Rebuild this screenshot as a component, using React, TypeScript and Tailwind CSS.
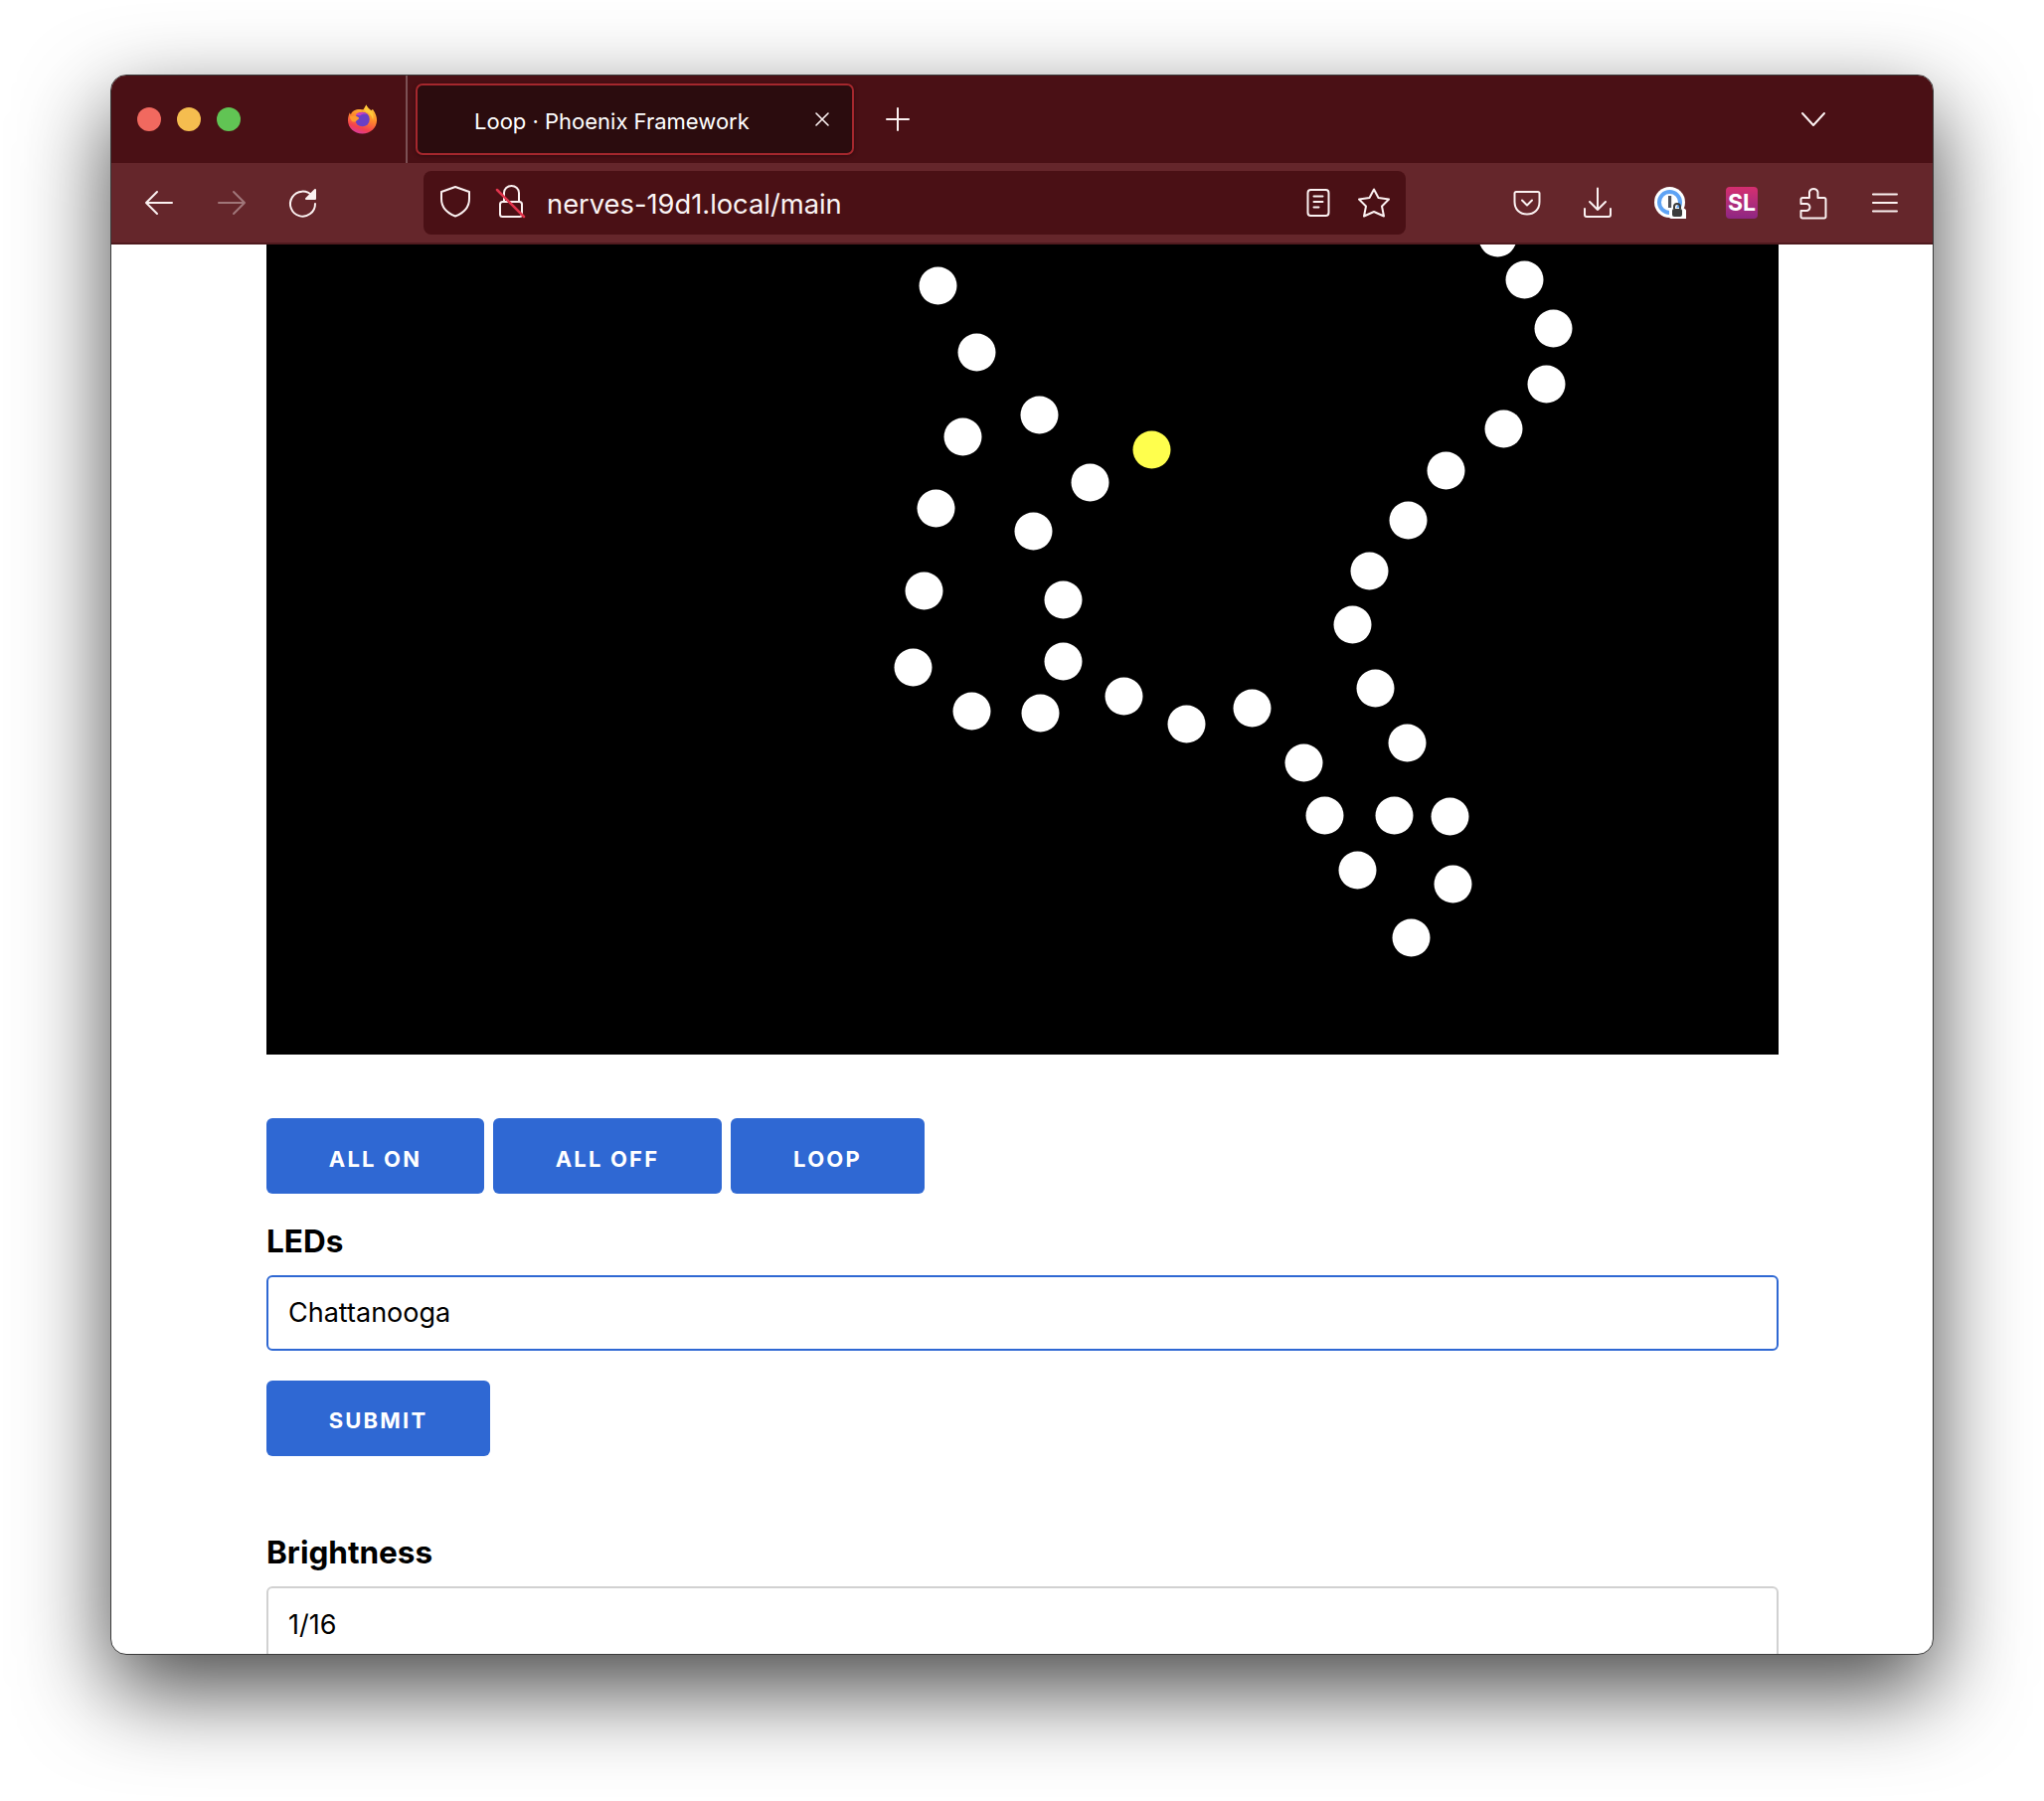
const ledDots = [
  [1506, 239], [1533, 281], [1562, 330], [1555, 386], [1512, 431], [1454, 473], [1416, 523], [1377, 574],
  [1360, 628], [1383, 692], [1415, 747], [1458, 821], [1402, 820], [1461, 889], [1419, 943], [1365, 875],
  [1332, 820], [1311, 767], [1259, 712], [1193, 728], [1130, 700], [1046, 717], [977, 715], [918, 671],
  [929, 594], [941, 511], [968, 439], [982, 354], [943, 287], [1045, 417], [1096, 485], [1039, 534],
  [1069, 603], [1069, 665],
]

const iconClass = 'w-7 h-7 shrink-0 overflow-visible'

function Stroke({ children, className = '', opacity = 1 }: { children: React.ReactNode; className?: string; opacity?: number }) {
  return (
    <svg viewBox="0 0 28 28" fill="none" stroke="#fbf1f1" strokeWidth={2} strokeLinecap="round" strokeLinejoin="round" opacity={opacity} className={`${iconClass} ${className}`}>
      {children}
    </svg>
  )
}

function FirefoxLogo() {
  return (
    <svg viewBox="0 0 32 32" className="w-[31px] h-[32px] shrink-0">
      <defs>
        <linearGradient id="ff-body" x1="0.7" y1="0" x2="0.35" y2="1">
          <stop offset="0" stopColor="#ffd23c" />
          <stop offset="0.45" stopColor="#ff8a2b" />
          <stop offset="0.8" stopColor="#f4404f" />
          <stop offset="1" stopColor="#d83aa0" />
        </linearGradient>
      </defs>
      <path d="M20 1c1 3 3 4 5 6 1-1 1-1 2-1 3 4 4 8 4 11 0 8-7 14-15 14S1 25 1 17c0-3 1-6 2-8 0 1 1 2 1 2 1-3 3-4 6-5 3-1 6 0 7 0 1-2 2-3 3-5z" fill="url(#ff-body)" />
      <circle cx="16" cy="16" r="7.5" fill="#6a3fc4" />
      <path d="M9 11c3-3 9-3 12 0-3-1-6 0-7 1-2 0-4 0-5-1z" fill="#c83fc0" />
      <path d="M3 13c3-1 7-1 9 1 1 1 0 3-2 3 0 2-3 2-5 1-1-2-2-3-2-5z" fill="#ff9a2e" />
      <path d="M20 1c1 3 3 4 5 6 2 2 3 6 2 10-1-5-4-8-8-9-1-3 0-5 1-7z" fill="#ffc93a" />
    </svg>
  )
}

function OnePassword() {
  return (
    <svg viewBox="0 0 32 32" className="w-8 h-8 shrink-0">
      <circle cx="15.500" cy="15.500" r="15.500" fill="#fff" />
      <circle cx="15.500" cy="15.500" r="10.500" fill="none" stroke="#5ea3f5" strokeWidth="4" />
      <rect x="14" y="9" width="3.200" height="12" fill="#50525a" />
      <path d="M17 32c-1 0-2-1-2-2v-7c0-1 1-2 2-2h10c2 0 5 1 5 3v8z" fill="#fff" />
      <path d="M20 22v-2a3 3 0 0 1 6 0v2" fill="none" stroke="#3b3b3b" strokeWidth="2" />
      <rect x="18" y="22" width="10" height="8" rx="2" fill="#3b3b3b" />
    </svg>
  )
}

function SavedLinks() {
  return (
    <div className="w-8 h-8 shrink-0 rounded-[4px] bg-gradient-to-b from-[#d52e6f] to-[#8e2583] flex items-center justify-center">
      <span className="font-['Inter',sans-serif] text-[23px] font-bold leading-none text-white">SL</span>
    </div>
  )
}

function ActionButton({ label, width }: { label: string; width: string }) {
  return (
    <button className={`${width} h-[76px] rounded-[6px] bg-[#2f68d3] text-white text-[22px] font-bold tracking-[0.1em] pt-[6px]`}>
      {label}
    </button>
  )
}

export default function App() {
  return (
    <div className="w-[2056px] h-[1812px] bg-white pt-[75px] pl-[111px] font-['Inter',sans-serif]">
      <div className="w-[1834px] h-[1590px] rounded-[16px] overflow-hidden bg-white flex flex-col border border-[#3a3a3a] shadow-[0_35px_90px_rgba(0,0,0,0.72)]">
        {/* Tab strip */}
        <div className="h-[88px] shrink-0 bg-[#4a1015] flex items-center">
          <div className="flex gap-4 ml-[26px]">
            <span className="w-6 h-6 rounded-full bg-[#f1695f]" />
            <span className="w-6 h-6 rounded-full bg-[#f5bd4f]" />
            <span className="w-6 h-6 rounded-full bg-[#61c454]" />
          </div>
          <div className="ml-[107px]">
            <FirefoxLogo />
          </div>
          <div className="ml-[28px] w-[2px] h-full bg-[#7c5155]" />
          <div className="ml-2 w-[441px] h-[72px] rounded-[7px] border-2 border-[#a5272d] bg-[#2b0c0e] flex items-center pl-[57px] pr-[22px] shadow-[0_1px_4px_rgba(0,0,0,0.35)]">
            <span className="text-white text-[22px] leading-none pt-1">Loop · Phoenix Framework</span>
            <svg viewBox="0 0 16 16" fill="none" stroke="#fbf1f1" strokeWidth={1.6} strokeLinecap="round" className="w-4 h-4 ml-auto">
              <path d="M2 2l12 12M14 2L2 14" />
            </svg>
          </div>
          <Stroke className="ml-[30px]">
            <path d="M14 3v22M3 14h22" />
          </Stroke>
          <svg viewBox="0 0 28 16" fill="none" stroke="#fbf1f1" strokeWidth={2} strokeLinecap="round" strokeLinejoin="round" className="w-7 h-4 ml-[893px]">
            <path d="M3 2l11 12L25 2" />
          </svg>
        </div>

        {/* Toolbar */}
        <div className="h-[82px] shrink-0 bg-[#65262b] border-b-2 border-[#4f1a1e] flex items-center">
          <Stroke className="ml-[34px]">
            <path d="M27 14H1M12 3L1 14l11 11" />
          </Stroke>
          <Stroke className="ml-[45px]" opacity={0.4}>
            <path d="M1 14h26M16 3l11 11-11 11" />
          </Stroke>
          <Stroke className="ml-[43px]">
            <path d="M24 7a12.500 12.500 0 1 0 3 8" />
            <path d="M27 1v9h-9z" fill="#fbf1f1" />
          </Stroke>

          <div className="ml-[108px] w-[988px] h-16 rounded-[8px] bg-[#4a1015] flex items-center pl-[17px] pr-[18px]">
            <Stroke>
              <path d="M15 -2L29 3V10C29 18 24 24 15 27.500C6 24 1 18 1 10V3Z" />
            </Stroke>
            <Stroke className="ml-[29px]">
              <path d="M7 13V4a7.500 7 0 0 1 15 0v9" />
              <rect x="3" y="13" width="22" height="15" rx="2.500" />
              <path d="M0 1l27 27" stroke="#e0344c" strokeWidth={2.5} />
            </Stroke>
            <span className="ml-[22px] text-[#fbf4f4] text-[27.300px] leading-none pt-1">nerves-19d1.local/main</span>
            <Stroke className="ml-auto">
              <rect x="3.500" y="1" width="21" height="26" rx="3" />
              <path d="M9.500 7.500h9M9.500 13h9M9.500 18.500h5" />
            </Stroke>
            <Stroke className="ml-7">
              <path d="M14 0.500L18.500 9 29 10.500 22 17.500 24 27.500 14 23 4 27.500 6 17.500-1 10.500 9.500 9Z" />
            </Stroke>
          </div>

          <Stroke className="ml-[108px]">
            <path d="M3 3h22a1.500 1.500 0 0 1 1.500 1.500V13c0 8-5.500 12.500-12.500 12.500S1.500 21 1.500 13V4.500A1.500 1.500 0 0 1 3 3z" />
            <path d="M9 11.500l5 5 5-5" />
          </Stroke>
          <Stroke className="ml-[43px]">
            <path d="M14 -0.500V21M6 13l8 8 8-8M1 20v6a2 2 0 0 0 2 2h22a2 2 0 0 0 2-2v-6" />
          </Stroke>
          <div className="ml-[43px]">
            <OnePassword />
          </div>
          <div className="ml-[40px]">
            <SavedLinks />
          </div>
          <Stroke className="ml-[42px]">
            <path d="M3 9H10V3a4.500 4.500 0 0 1 8.500 0V9H25a1.500 1.500 0 0 1 1.500 1.500V28a1.500 1.500 0 0 1-1.500 1.500H3A1.500 1.500 0 0 1 1.500 28V22H7a3.500 3.500 0 0 0 0-7H1.500V10.500A1.500 1.500 0 0 1 3 9Z" />
          </Stroke>
          <Stroke className="ml-[44px]">
            <path d="M2 5.500h24M2 14h24M2 22.500h24" />
          </Stroke>
        </div>

        {/* Page */}
        <div className="flex-1 min-h-0 pl-[156px] pr-[155px] text-black">
          <div className="h-[815px] bg-black">
            <svg viewBox="267.500 245.500 1521 815" className="w-full h-full block">
              {ledDots.map(([x, y]) => (
                <circle key={`${x}-${y}`} cx={x} cy={y} r="19" fill="#fff" />
              ))}
              <circle cx="1158" cy="452" r="19" fill="#ffff4d" />
            </svg>
          </div>

          <div className="flex gap-[9px] mt-[64px]">
            <ActionButton label="ALL ON" width="w-[219px]" />
            <ActionButton label="ALL OFF" width="w-[230px]" />
            <ActionButton label="LOOP" width="w-[195px]" />
          </div>

          <h2 className="mt-[30px] text-[31.500px] leading-9 font-bold">LEDs</h2>
          <input
            readOnly
            value="Chattanooga"
            className="mt-[16px] block w-full h-[76px] rounded-[6px] border-2 border-[#2f68d3] px-5 pb-[2px] text-[27px] text-black outline-none"
          />
          <button className="mt-[30px] block w-[225px] h-[76px] rounded-[6px] bg-[#2f68d3] text-white text-[22px] font-bold tracking-[0.1em] pt-1">
            SUBMIT
          </button>

          <h2 className="mt-[79px] text-[31.500px] leading-9 font-bold">Brightness</h2>
          <input
            readOnly
            value="1/16"
            className="mt-[16px] block w-full h-[76px] rounded-[6px] border-2 border-[#d1d1d1] px-5 text-[27px] text-black outline-none"
          />
        </div>
      </div>
    </div>
  )
}
